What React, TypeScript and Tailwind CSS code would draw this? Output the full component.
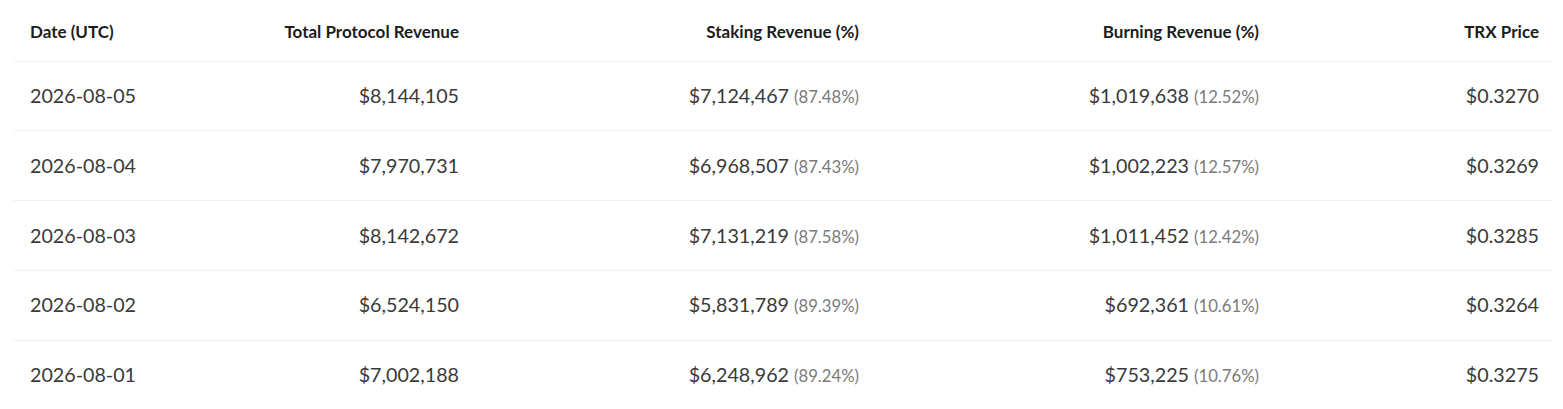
import React from "react";

const rows = [
  ["2026-08-05", "$8,144,105", "$7,124,467", "87.48%", "$1,019,638", "12.52%", "$0.3270"],
  ["2026-08-04", "$7,970,731", "$6,968,507", "87.43%", "$1,002,223", "12.57%", "$0.3269"],
  ["2026-08-03", "$8,142,672", "$7,131,219", "87.58%", "$1,011,452", "12.42%", "$0.3285"],
  ["2026-08-02", "$6,524,150", "$5,831,789", "89.39%", "$692,361", "10.61%", "$0.3264"],
  ["2026-08-01", "$7,002,188", "$6,248,962", "89.24%", "$753,225", "10.76%", "$0.3275"],
];

export default function App() {
  return (
    <div className="bg-white w-[1563px] h-[409px] overflow-hidden pl-[14px] pr-[10px]" style={{ fontFamily: "Lato, 'Open Sans', sans-serif" }}>
      <table className="w-full border-collapse table-fixed">
        <colgroup>
          <col className="w-[230px]" />
          <col className="w-[231px]" />
          <col className="w-[400px]" />
          <col className="w-[400px]" />
          <col />
        </colgroup>
        <thead>
          <tr className="h-[61px] border-b border-[#efefef] text-[17px] font-bold text-[#1c1c1c]">
            <th className="text-left pl-4 pr-[14px] pt-[3px]">Date (UTC)</th>
            <th className="text-right pr-4 pt-[3px]">Total Protocol Revenue</th>
            <th className="text-right pr-4 pt-[3px]">Staking Revenue (%)</th>
            <th className="text-right pr-4 pt-[3px]">Burning Revenue (%)</th>
            <th className="text-right pr-[14px] pt-[3px]">TRX Price</th>
          </tr>
        </thead>
        <tbody>
          {rows.map((r) => (
            <tr key={r[0]} className="h-[69.75px] border-b border-[#efefef] text-[19.7px] text-[#3a3a3a]">
              <td className="text-left pl-4">{r[0]}</td>
              <td className="text-right pr-4">{r[1]}</td>
              <td className="text-right pr-4">
                {r[2]} <span className="text-[16.7px] text-[#7a7a7a]">({r[3]})</span>
              </td>
              <td className="text-right pr-4">
                {r[4]} <span className="text-[16.7px] text-[#7a7a7a]">({r[5]})</span>
              </td>
              <td className="text-right pr-[14px]">{r[6]}</td>
            </tr>
          ))}
        </tbody>
      </table>
    </div>
  );
}
